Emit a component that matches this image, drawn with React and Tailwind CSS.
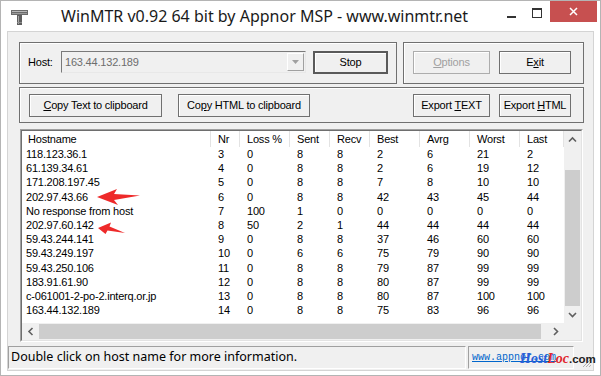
import React from "react";

const rows = [
  ["118.123.36.1", "3", "0", "8", "8", "2", "6", "21", "2"],
  ["61.139.34.61", "4", "0", "8", "8", "2", "6", "19", "12"],
  ["171.208.197.45", "5", "0", "8", "8", "7", "8", "10", "10"],
  ["202.97.43.66", "6", "0", "8", "8", "42", "43", "45", "44"],
  ["No response from host", "7", "100", "1", "0", "0", "0", "0", "0"],
  ["202.97.60.142", "8", "50", "2", "1", "44", "44", "44", "44"],
  ["59.43.244.141", "9", "0", "8", "8", "37", "46", "60", "60"],
  ["59.43.249.197", "10", "0", "6", "6", "75", "79", "90", "90"],
  ["59.43.250.106", "11", "0", "8", "8", "79", "87", "99", "99"],
  ["183.91.61.90", "12", "0", "8", "8", "80", "87", "99", "99"],
  ["c-061001-2-po-2.interq.or.jp", "13", "0", "8", "8", "80", "87", "100", "100"],
  ["163.44.132.189", "14", "0", "8", "8", "75", "83", "96", "96"],
];

const headers = ["Hostname", "Nr", "Loss %", "Sent", "Recv", "Best", "Avrg", "Worst", "Last"];
const colW = [
  "w-[189px]",
  "w-[29px]",
  "w-[50px]",
  "w-[40px]",
  "w-[40px]",
  "w-[50px]",
  "w-[50px]",
  "w-[50px]",
  "w-[44px]",
];

function Btn({ w, children, def, disabled }) {
  let cls = "border border-[#707070] text-black";
  if (def) cls = "border-2 border-[#5a5a5a] text-black";
  if (disabled) cls = "border border-[#adadad] text-[#a0a0a0]";
  return (
    <div
      className={`${w} h-[23px] flex items-center justify-center bg-[#f0f0f0] shadow-[inset_1px_1px_0_#ffffff] ${cls}`}
    >
      <span className="leading-none">{children}</span>
    </div>
  );
}

function Chevron({ dir }) {
  const pts = {
    up: "1,5.5 4.5,2 8,5.5",
    down: "1,2 4.5,5.5 8,2",
    left: "5.5,1 2,4.5 5.5,8",
    right: "2,1 5.5,4.5 2,8",
  }[dir];
  const vert = dir === "up" || dir === "down";
  return (
    <svg width={vert ? 9 : 7} height={vert ? 7 : 9} viewBox={vert ? "0 0 9 7" : "0 0 7 9"}>
      <polyline points={pts} fill="none" stroke="#5f5f5f" strokeWidth="1.6" />
    </svg>
  );
}

export default function App() {
  return (
    <div className="w-[601px] h-[376px] relative bg-white border border-[#b4b4b4] flex flex-col overflow-hidden font-['Liberation_Sans',Arial,sans-serif] text-[11px] tracking-[-0.2px] text-black">
      {/* Title bar */}
      <div className="h-[30px] flex items-start shrink-0">
        <div className="ml-[10px] mt-[9px]">
          <svg width="17" height="15" viewBox="0 0 17 15">
            <rect x="0" y="0" width="17" height="5" fill="#6a6a6a" />
            <rect x="1" y="1" width="15" height="1" fill="#b8b8b8" />
            <rect x="1" y="3" width="15" height="1" fill="#9a9a9a" />
            <rect x="6" y="5" width="5" height="10" fill="#5e5e5e" />
            <rect x="7" y="6" width="1" height="8" fill="#a8a8a8" />
            <rect x="6" y="12" width="5" height="1" fill="#8c8c8c" />
          </svg>
        </div>
        <div className="ml-[33px] mt-[5px] font-['Noto_Sans',sans-serif] text-[16px] tracking-normal leading-[20px] text-[#1a1a1a] whitespace-nowrap">
          WinMTR v0.92 64 bit by Appnor MSP - www.winmtr.net
        </div>
        <div className="ml-auto flex items-start mr-[3px]">
          <div className="w-[26px] h-[21px] flex justify-center pt-[15px]">
            <div className="w-[9px] h-[2px] bg-[#333333]" />
          </div>
          <div className="w-[26px] h-[21px] flex justify-center pt-[7px]">
            <div className="w-[10px] h-[10px] border border-[#333333] border-t-2" />
          </div>
          <div className="w-[47px] h-[21px] bg-[#c75050] flex items-center justify-center">
            <svg width="9" height="9" viewBox="0 0 9 9">
              <path d="M1 1 L8 8 M8 1 L1 8" stroke="#ffffff" strokeWidth="1.5" />
            </svg>
          </div>
        </div>
      </div>

      {/* Client area */}
      <div className="mx-[6px] h-[340px] bg-[#f0f0f0] border border-[#d4d4d4] flex flex-col shrink-0">
        <div className="pl-[11px] pt-[10px] flex flex-col">
          {/* Row 1 */}
          <div className="flex gap-[6px]">
            <div className="w-[378px] h-[42px] border border-[#707070] shadow-[inset_1px_1px_0_#ffffff] flex items-start pl-[8px] pt-[8px]">
              <div className="w-[33px] h-[22px] flex items-center">Host:</div>
              <div className="w-[245px] h-[22px] border border-t-[#7a7a7a] border-l-[#7a7a7a] border-r-[#e8e8e8] border-b-[#e8e8e8] bg-[#f0f0f0] flex items-center relative">
                <span className="pl-[3px] text-[#6d6d6d]">163.44.132.189</span>
                <div className="ml-auto mr-[1px] w-[17px] h-[18px] border border-t-white border-l-white border-r-[#a0a0a0] border-b-[#a0a0a0] flex items-center justify-center">
                  <svg width="7" height="4" viewBox="0 0 7 4">
                    <path d="M0 0 L7 0 L3.5 4 Z" fill="#a0a0a0" />
                  </svg>
                </div>
              </div>
              <div className="ml-[7px]">
                <Btn w="w-[75px]" def>
                  Stop
                </Btn>
              </div>
            </div>
            <div className="w-[181px] h-[42px] border border-[#707070] shadow-[inset_1px_1px_0_#ffffff] flex items-start pl-[9px] pt-[8px] gap-[9px]">
              <Btn w="w-[77px]" disabled>
                <span className="underline">O</span>ptions
              </Btn>
              <Btn w="w-[72px]">
                E<span className="underline">x</span>it
              </Btn>
            </div>
          </div>

          {/* Row 2 */}
          <div className="mt-[3px] w-[565px] h-[36px] border border-[#707070] shadow-[inset_1px_1px_0_#ffffff] flex items-start pl-[9px] pt-[6px]">
            <Btn w="w-[133px]">
              <span className="underline">C</span>opy Text to clipboard
            </Btn>
            <div className="ml-[16px]">
              <Btn w="w-[132px]">
                Co<span className="underline">p</span>y HTML to clipboard
              </Btn>
            </div>
            <div className="ml-[103px]">
              <Btn w="w-[77px]">
                Export <span className="underline">T</span>EXT
              </Btn>
            </div>
            <div className="ml-[9px]">
              <Btn w="w-[72px]">
                Export <span className="underline">H</span>TML
              </Btn>
            </div>
          </div>

          {/* List */}
          <div className="mt-[6px] ml-[1px] w-[563px] h-[213px] border border-t-[#a0a0a0] border-l-[#a0a0a0] border-r-white border-b-white">
            <div className="w-full h-full border border-t-[#6e6e6e] border-l-[#6e6e6e] border-r-[#e3e3e3] border-b-[#e3e3e3] flex flex-col bg-white">
              <div className="flex h-[192px]">
                <div className="w-[542px] flex flex-col">
                  <div className="flex h-[16px]">
                    {headers.map((h, i) => (
                      <div
                        key={h}
                        className={`${colW[i]} ${i === 0 ? "pl-[6px]" : "pl-[7px]"} h-full flex items-center border-r border-[#e3e3e3] whitespace-nowrap`}
                      >
                        {h}
                      </div>
                    ))}
                  </div>
                  {rows.map((r, ri) => (
                    <div key={ri} className="flex h-[14.2px] leading-[14.2px]">
                      {r.map((c, ci) => (
                        <div
                          key={ci}
                          className={`${colW[ci]} ${ci === 0 ? "pl-[4px]" : "pl-[7px]"} whitespace-nowrap`}
                        >
                          {c}
                        </div>
                      ))}
                    </div>
                  ))}
                </div>
                <div className="w-[17px] bg-[#f0f0f0] flex flex-col">
                  <div className="h-[17px] flex items-center justify-center">
                    <Chevron dir="up" />
                  </div>
                  <div className="flex-1 flex flex-col justify-end px-[1px]">
                    <div className="h-[136px] bg-[#cdcdcd]" />
                  </div>
                  <div className="h-[17px] flex items-center justify-center">
                    <Chevron dir="down" />
                  </div>
                </div>
              </div>
              <div className="flex h-[17px]">
                <div className="w-[542px] bg-[#f0f0f0] flex">
                  <div className="w-[17px] flex items-center justify-center">
                    <Chevron dir="left" />
                  </div>
                  <div className="flex-1 py-[1px]">
                    <div className="w-[502px] h-full bg-[#cdcdcd]" />
                  </div>
                  <div className="w-[17px] flex items-center justify-center">
                    <Chevron dir="right" />
                  </div>
                </div>
                <div className="w-[17px] bg-[#f0f0f0]" />
              </div>
            </div>
          </div>
        </div>

        {/* Status bar */}
        <div className="mt-[4px] h-[23px] flex">
          <div className="w-[458px] h-full border border-t-[#a0a0a0] border-l-[#a0a0a0] border-r-white border-b-white flex items-center pl-[2px] font-['Noto_Sans',sans-serif] text-[12.5px] tracking-normal whitespace-nowrap">
            Double click on host name for more information.
          </div>
          <div className="ml-[2px] w-[106px] h-full border border-t-[#a0a0a0] border-l-[#a0a0a0] border-r-white border-b-white flex items-center pl-[3px]">
            <span className="font-['Liberation_Mono',monospace] text-[10px] tracking-normal text-[#0066cc] underline">
              www.appnor.com
            </span>
          </div>
          <div className="ml-auto mr-[1px] self-end mb-[1px]">
            <svg width="11" height="11" viewBox="0 0 11 11">
              <path d="M10 2 L2 10 M10 5 L5 10 M10 8 L8 10" stroke="#b0b0b0" strokeWidth="1" />
            </svg>
          </div>
        </div>
      </div>

      {/* Annotation arrows (overlay) */}
      <svg
        className="absolute left-0 top-0 pointer-events-none"
        width="601"
        height="376"
        viewBox="0 0 601 376"
      >
        <path d="M96 196 L116 188 L113 193 L139 194.5 L113 199 L117 204 Z" fill="#ee2a2a" />
        <path d="M97 227 L110 221.5 L108.5 225.5 L124 232 L106.5 229.5 L104.5 233 Z" fill="#ee2a2a" />
      </svg>

      {/* Watermark overlay */}
      <div className="absolute left-[519px] top-[350px] flex items-baseline whitespace-nowrap tracking-normal leading-[16px] pointer-events-none">
        <span className="font-['Liberation_Serif',serif] italic font-bold text-[14px] text-[#2a5ed8]">Host</span>
        <span className="font-['Liberation_Serif',serif] italic font-bold text-[14px] text-[#e0262c]">Loc</span>
        <span className="font-['Liberation_Sans',sans-serif] font-bold text-[11.5px] text-[#222222]">.com</span>
      </div>
    </div>
  );
}
